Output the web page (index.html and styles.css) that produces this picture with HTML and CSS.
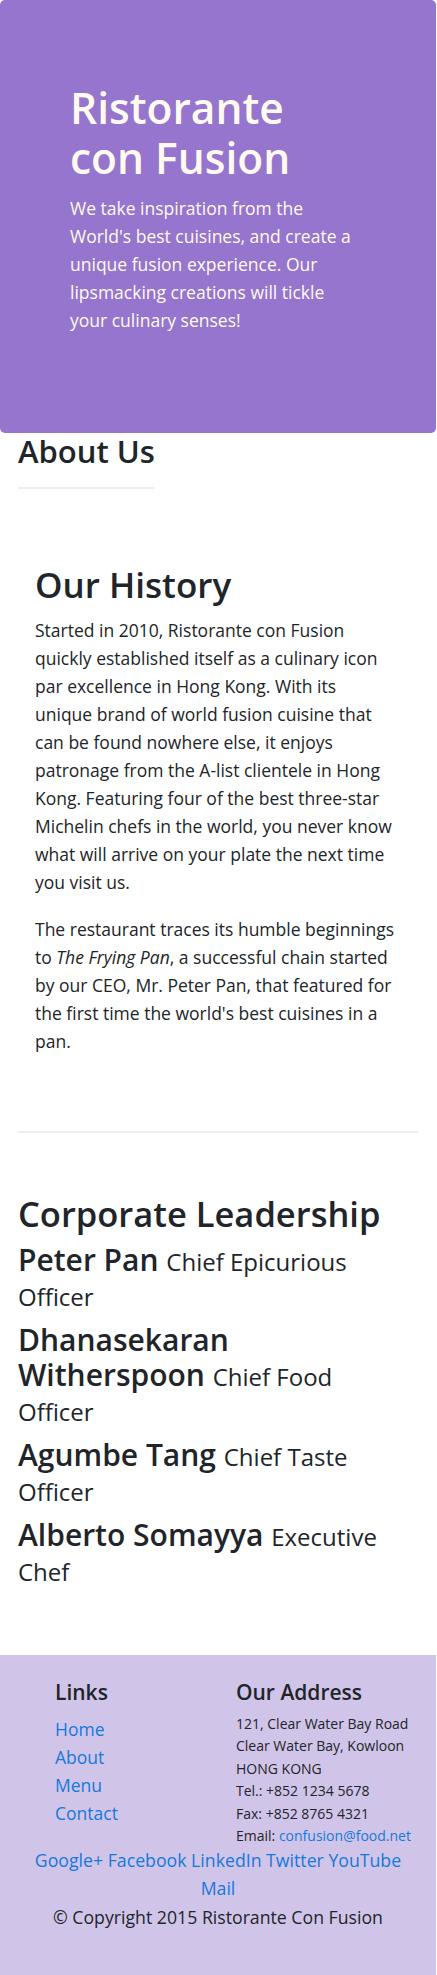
FILE: index.html
```html
<!DOCTYPE html>
<html lang="en">
<head>
<meta charset="utf-8">
<title>Ristorante con Fusion - About Us</title>
<link rel="stylesheet" href="styles.css">
</head>
<body>
<div class="page">
  <header class="jumbotron">
    <div class="jumbo-inner">
      <h1 class="jumbo-title">Ristorante<br>con Fusion</h1>
      <p class="jumbo-text">We take inspiration from the World's best cuisines, and create a unique fusion experience. Our lipsmacking creations will tickle your culinary senses!</p>
    </div>
  </header>

  <main class="container">
    <div class="about-head">
      <h2 class="about-title">About Us</h2>
      <hr class="rule">
    </div>

    <section class="history">
      <h2 class="history-title">Our History</h2>
      <p class="body-text">Started in 2010, Ristorante con Fusion quickly established itself as a culinary icon par excellence in Hong Kong. With its unique brand of world fusion cuisine that can be found nowhere else, it enjoys patronage from the A-list clientele in Hong Kong. Featuring four of the best three-star Michelin chefs in the world, you never know what will arrive on your plate the next time you visit us.</p>
      <p class="body-text">The restaurant traces its humble beginnings to <em>The Frying Pan</em>, a successful chain started by our CEO, Mr. Peter Pan, that featured for the first time the world's best cuisines in a pan.</p>
    </section>

    <hr class="rule rule-wide">

    <section class="leaders">
      <h2 class="leaders-title">Corporate Leadership</h2>
      <h3 class="leader">Peter Pan <small class="role">Chief Epicurious Officer</small></h3>
      <h3 class="leader">Dhanasekaran Witherspoon <small class="role">Chief Food Officer</small></h3>
      <h3 class="leader">Agumbe Tang <small class="role">Chief Taste Officer</small></h3>
      <h3 class="leader">Alberto Somayya <small class="role">Executive Chef</small></h3>
    </section>
  </main>

  <footer class="footer">
    <div class="footer-inner">
      <div class="footer-row">
        <div class="footer-links">
          <h5 class="footer-title">Links</h5>
          <ul class="link-list">
            <li><a href="#">Home</a></li>
            <li><a href="#">About</a></li>
            <li><a href="#">Menu</a></li>
            <li><a href="#">Contact</a></li>
          </ul>
        </div>
        <div class="footer-address">
          <h5 class="footer-title">Our Address</h5>
          <address class="address">
            121, Clear Water Bay Road<br>
            Clear Water Bay, Kowloon<br>
            HONG KONG<br>
            Tel.: +852 1234 5678<br>
            Fax: +852 8765 4321<br>
            Email: <a href="#">confusion@food.net</a>
          </address>
        </div>
      </div>
      <div class="social">
        <a href="#">Google+</a> <a href="#">Facebook</a> <a href="#">LinkedIn</a> <a href="#">Twitter</a> <a href="#">YouTube</a> <a href="#">Mail</a>
      </div>
      <p class="copyright">© Copyright 2015 Ristorante Con Fusion</p>
    </div>
  </footer>
</div>
</body>
</html>
```
FILE: styles.css
```css
html, body {
  margin: 0;
  padding: 0;
  background: #ffffff;
}

body {
  font-family: "Open Sans", "Noto Sans", "DejaVu Sans", sans-serif;
  font-size: 17.5px;
  line-height: 28px;
  color: #212529;
}

.page {
  width: 436px;
}

a {
  color: #1479db;
  text-decoration: none;
}

/* Jumbotron */
.jumbotron {
  background: #9575cd;
  border-radius: 5px;
  padding: 83px 0 99px 70px;
}

.jumbo-title {
  margin: 0 0 11px;
  font-size: 42.5px;
  line-height: 50px;
  font-weight: 600;
  color: #fffaf0;
}

.jumbo-text {
  margin: 0;
  width: 288px;
  font-size: 17.5px;
  line-height: 28px;
  color: #fffaf0;
}

/* Main */
.container {
  padding: 0 18px;
}

.about-head {
  width: fit-content;
}

.about-title {
  margin: 0;
  font-size: 31px;
  line-height: 36px;
  font-weight: 600;
}

.rule {
  margin: 18px 0 0;
  border: 0;
  border-top: 2px solid #eeeeee;
  height: 0;
}

.history {
  margin-top: 75px;
  padding-left: 17px;
}

.history-title {
  margin: 0 0 10px;
  font-size: 35px;
  line-height: 42px;
  font-weight: 600;
}

.body-text {
  margin: 0 0 19px;
  width: 362px;
}

.body-text:last-child {
  margin-bottom: 0;
}

.rule-wide {
  margin-top: 76px;
}

.leaders {
  margin-top: 60px;
}

.leaders-title {
  margin: 0 0 8px;
  font-size: 34.5px;
  line-height: 41px;
  font-weight: 600;
}

.leader {
  margin: 0 0 10px;
  max-width: 385px;
  font-size: 30px;
  line-height: 35px;
  font-weight: 600;
}

.leader:last-child {
  margin-bottom: 0;
}

.role {
  font-size: 24px;
  line-height: 1;
  font-weight: 400;
}

/* Footer */
.footer {
  margin-top: 68px;
  background: #d1c4e9;
  padding: 25px 0 48px;
}

.footer-inner {
  padding: 0 18px;
}

.footer-row {
  display: flex;
}

.footer-links {
  width: 181px;
  padding-left: 37px;
}

.footer-address {
  flex: 1;
}

.footer-title {
  margin: 0;
  font-size: 21px;
  line-height: 25px;
  font-weight: 600;
}

.link-list {
  list-style: none;
  margin: 10px 0 0;
  padding: 0;
  font-size: 17.5px;
  line-height: 28px;
}

.address {
  margin: 8px 0 0;
  font-style: normal;
  font-size: 14px;
  line-height: 22.4px;
}

.social {
  text-align: center;
  font-size: 17.7px;
  line-height: 27.5px;
}

.copyright {
  margin: 1px 0 0;
  text-align: center;
  font-size: 17.7px;
  line-height: 28px;
}
```
